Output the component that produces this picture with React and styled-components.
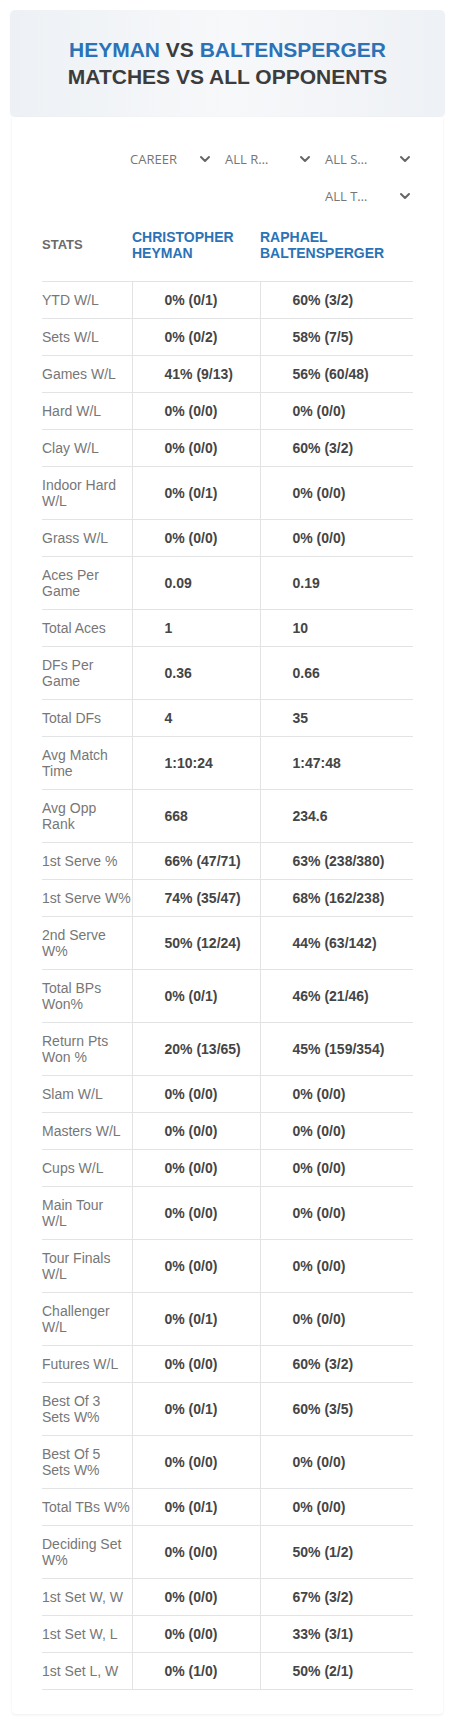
import React from 'react';
import styled, { createGlobalStyle } from 'styled-components';
import { ChevronDown } from 'lucide-react';

const BLUE = '#2b72b6';
const DARK = '#3c3c3c';
const LINE = '#e1e3e5';

const GlobalStyle = createGlobalStyle`
    body {
        margin: 0;
        background: #fff;
        font-family: "Liberation Sans", Arial, sans-serif;
    }
`

const Page = styled.div`
    padding: 10px;
`

const HeaderCard = styled.div`
    background: linear-gradient(90deg, #edf1f5 0%, #f7f8fa 50%, #eef1f5 100%);
    border-radius: 5px;
    box-shadow: 0 1px 2px rgba(0, 0, 0, 0.04);
    padding: 27px 0;
    text-align: center;
`

const Title = styled.h1`
    margin: 0;
    font-size: 21px;
    line-height: 26.7px;
    font-weight: bold;
    color: ${DARK};
    text-transform: uppercase;
`

const Name = styled.span`
    color: ${BLUE};
`

const ContentCard = styled.div`
    margin: 0 2px;
    background: #fff;
    border-radius: 0 0 4px 4px;
    box-shadow: 0 1px 3px rgba(0, 0, 0, 0.07);
    padding: 27px 30px 24px;
`

const Filters = styled.div`
    display: flex;
    flex-wrap: wrap;
    justify-content: flex-end;
    gap: 6.5px 5px;
`

const Select = styled.div`
    box-sizing: border-box;
    width: 95px;
    height: 30px;
    display: flex;
    align-items: center;
    justify-content: space-between;
    padding-left: ${props => props.inset ? '12px' : '7px'};
    font-family: "Open Sans", "Noto Sans", sans-serif;
    font-size: 13px;
    color: #767676;
    cursor: pointer;

    svg {
        color: #666;
        flex-shrink: 0;
    }
`

const Table = styled.table`
    width: 100%;
    table-layout: fixed;
    border-collapse: collapse;
`

const Th = styled.th`
    text-align: left;
    vertical-align: middle;
    padding: 18px 0 20px;
    font-size: ${props => props.player ? '14px' : '13px'};
    line-height: 16px;
    font-weight: bold;
    color: ${props => props.player ? BLUE : '#6a6a6a'};
    text-transform: uppercase;
`

const Row = styled.tr`
    &:first-child td {
        border-top: 1px solid ${LINE};
    }
`

const Label = styled.td`
    padding: 10px 0;
    font-size: 14px;
    line-height: 16px;
    color: #777;
    border-bottom: 1px solid ${LINE};
`

const Value = styled.td`
    padding: 10px 0 10px 32px;
    font-size: 14px;
    line-height: 16px;
    font-weight: bold;
    color: #454545;
    border-bottom: 1px solid ${LINE};
    border-left: 1px solid ${LINE};
`

const stats = [
    ['YTD W/L', '0% (0/1)', '60% (3/2)'],
    ['Sets W/L', '0% (0/2)', '58% (7/5)'],
    ['Games W/L', '41% (9/13)', '56% (60/48)'],
    ['Hard W/L', '0% (0/0)', '0% (0/0)'],
    ['Clay W/L', '0% (0/0)', '60% (3/2)'],
    ['Indoor Hard W/L', '0% (0/1)', '0% (0/0)'],
    ['Grass W/L', '0% (0/0)', '0% (0/0)'],
    ['Aces Per Game', '0.09', '0.19'],
    ['Total Aces', '1', '10'],
    ['DFs Per Game', '0.36', '0.66'],
    ['Total DFs', '4', '35'],
    ['Avg Match Time', '1:10:24', '1:47:48'],
    ['Avg Opp Rank', '668', '234.6'],
    ['1st Serve %', '66% (47/71)', '63% (238/380)'],
    ['1st Serve W%', '74% (35/47)', '68% (162/238)'],
    ['2nd Serve W%', '50% (12/24)', '44% (63/142)'],
    ['Total BPs Won%', '0% (0/1)', '46% (21/46)'],
    ['Return Pts Won %', '20% (13/65)', '45% (159/354)'],
    ['Slam W/L', '0% (0/0)', '0% (0/0)'],
    ['Masters W/L', '0% (0/0)', '0% (0/0)'],
    ['Cups W/L', '0% (0/0)', '0% (0/0)'],
    ['Main Tour W/L', '0% (0/0)', '0% (0/0)'],
    ['Tour Finals W/L', '0% (0/0)', '0% (0/0)'],
    ['Challenger W/L', '0% (0/1)', '0% (0/0)'],
    ['Futures W/L', '0% (0/0)', '60% (3/2)'],
    ['Best Of 3 Sets W%', '0% (0/1)', '60% (3/5)'],
    ['Best Of 5 Sets W%', '0% (0/0)', '0% (0/0)'],
    ['Total TBs W%', '0% (0/1)', '0% (0/0)'],
    ['Deciding Set W%', '0% (0/0)', '50% (1/2)'],
    ['1st Set W, W', '0% (0/0)', '67% (3/2)'],
    ['1st Set W, L', '0% (0/0)', '33% (3/1)'],
    ['1st Set L, W', '0% (1/0)', '50% (2/1)'],
]

const filters = ['CAREER', 'ALL R…', 'ALL S…', 'ALL T…']

export default function App() {
    return (
        <Page>
            <GlobalStyle />
            <HeaderCard>
                <Title>
                    <Name>Heyman</Name> vs <Name>Baltensperger</Name>
                    <br />
                    Matches vs all opponents
                </Title>
            </HeaderCard>
            <ContentCard>
                <Filters>
                    {filters.map((f, i) => (
                        <Select key={f} inset={i === 0}>
                            {f}
                            <ChevronDown size={16} strokeWidth={3} />
                        </Select>
                    ))}
                </Filters>
                <Table>
                    <colgroup>
                        <col style={{ width: 90 }} />
                        <col style={{ width: 128 }} />
                        <col />
                    </colgroup>
                    <thead>
                        <tr>
                            <Th>Stats</Th>
                            <Th player>Christopher Heyman</Th>
                            <Th player>Raphael Baltensperger</Th>
                        </tr>
                    </thead>
                    <tbody>
                        {stats.map(([label, a, b]) => (
                            <Row key={label}>
                                <Label>{label}</Label>
                                <Value>{a}</Value>
                                <Value>{b}</Value>
                            </Row>
                        ))}
                    </tbody>
                </Table>
            </ContentCard>
        </Page>
    );
}
